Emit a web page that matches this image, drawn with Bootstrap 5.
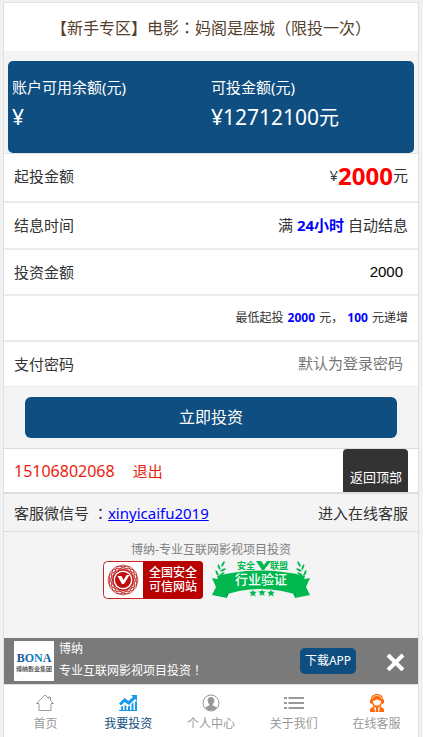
<!DOCTYPE html>
<html lang="zh-CN">
<head>
<meta charset="utf-8">
<meta name="viewport" content="width=device-width, initial-scale=1">
<title>博纳 - 我要投资</title>
<link href="https://cdn.jsdelivr.net/npm/bootstrap@5.3.0/dist/css/bootstrap.min.css" rel="stylesheet">
<style>
  body { background: #f1f1f1; color: #333; font: 15px/24px "Noto Sans", "Noto Sans CJK SC", sans-serif; padding: 2px 4px 0 3px; }
  .shell { min-height: calc(100vh - 2px); background: #f4f4f4; border: 1px solid #e0e0e0; border-bottom: 0; }
  .page-title { font-size: 16px; line-height: 24px; padding: 12px 0 11px; color: #54402e; }
  .centered-mark { font-family: "Noto Sans CJK TC", sans-serif; }
  .balance { background: #0f4e80; border-radius: 5px; margin: 10px 4px 0; padding: 14px 4px 17px; }
  .balance dd { font-size: 20px; line-height: 36px; }
  .digits { font-size: 21px; }
  .line { padding: 10px; border-bottom: 2px solid #eaeaea; background: #fff; }
  .line:first-child { border-top: 1px solid #e4e4e4; padding: 8px 10px 12px; }
  .line:nth-child(2) { padding-bottom: 11px; }
  .line:last-child { border-bottom-width: 1px; }
  .price { line-height: 27px; }
  .price b { font-size: 24px; color: #f00; }
  .hot { color: #00f; }
  .line input { font-family: "Liberation Sans", "Noto Sans CJK SC", sans-serif; line-height: 24px; width: 180px; padding: 0 5px 0 0; color: #000; background: transparent; }
  .line input::placeholder { color: #757575; }
  .fine { font-size: 12px; }
  .fine .hot { margin: 0 1px; }
  .submit-wrap { padding: 10px 21px; }
  .btn-invest { background: #0f4e80; color: #fff; font-size: 16px; line-height: 41px; border-radius: 6px; }
  .account { border-top: 1px solid #dcdcdc; border-bottom: 2px solid #dcdcdc; padding: 0 10px; }
  .account a { color: #ea1c0d; }
  .account .phone { font-size: 16px; margin-right: 18px; }
  .account .to-top { background: #333; color: #fff; font-size: 13px; line-height: 20px; padding: 18px 6px 5px 7px; border-radius: 4px 4px 0 0; }
  .service { padding: 7px 10px 6px; border-bottom: 1px solid #dcdcdc; }
  .service .wechat { color: #00f; }
  .site-note { color: #808080; font-size: 12px; line-height: 20px; padding-top: 8px; }
  .app-bar { background: #7a7a7a; color: #fff; font-size: 12px; line-height: 21px; padding: 0 13px 0 10px; height: 46px; }
  .app-name { padding: 0 0 3px 5px; }
  .btn-app { background: #0f4e80; color: #fff; font-size: 12px; line-height: 26px; border-radius: 5px; width: 56px; margin-right: 30px; }
  .tabs { background: #fff; border-top: 1px solid #e0e0e0; padding: 8px 0 3px; font-size: 12px; line-height: 21px; }
  .tabs a { color: #999; }
  .tabs a.active { color: #0f4e80; }
</style>
<script src="https://cdn.jsdelivr.net/npm/bootstrap@5.3.0/dist/js/bootstrap.bundle.min.js"></script>
</head>
<body>
<div class="shell d-flex flex-column" id="top">
  <h1 class="page-title bg-white text-center fw-normal m-0">【新手专区】电影<span class="centered-mark" lang="zh-TW">：</span>妈阁是座城（限投一次）</h1>

  <section class="balance text-white">
    <div class="row g-0">
      <dl class="col-6 m-0"><dt class="fw-normal">账户可用余额(元)</dt><dd class="m-0"><span class="digits">¥</span></dd></dl>
      <dl class="col-6 m-0"><dt class="fw-normal">可投金额(元)</dt><dd class="m-0"><span class="digits">¥12712100</span>元</dd></dl>
    </div>
  </section>

  <form>
    <div>
      <div class="line d-flex justify-content-between align-items-center"><span>起投金额</span><span class="price d-flex align-items-center">¥<b>2000</b>元</span></div>
      <div class="line d-flex justify-content-between"><span>结息时间</span><span>满 <b class="hot">24小时</b> 自动结息</span></div>
      <div class="line d-flex justify-content-between"><label for="amount">投资金额</label><input class="border-0 text-end" id="amount" type="text" inputmode="numeric" value="2000"></div>
      <div class="line fine text-end">最低起投 <b class="hot">2000</b> 元， <b class="hot">100</b> 元递增</div>
      <div class="line d-flex justify-content-between"><label for="paypwd">支付密码</label><input class="border-0 text-end" id="paypwd" type="password" placeholder="默认为登录密码"></div>
    </div>
    <div class="submit-wrap"><button class="btn-invest border-0 w-100 p-0 d-block" type="button">立即投资</button></div>
  </form>

  <div class="account bg-white d-flex align-items-center">
    <a class="phone text-decoration-none" href="#account">15106802068</a>
    <a class="text-decoration-none" href="#logout">退出</a>
    <a class="to-top text-decoration-none ms-auto" href="#top">返回顶部</a>
  </div>
  <div class="service d-flex justify-content-between">
    <span>客服微信号 <span class="centered-mark" lang="zh-TW">：</span><a class="wechat" href="#wechat">xinyicaifu2019</a></span>
    <a class="text-reset text-decoration-none" href="#service">进入在线客服</a>
  </div>

  <div class="text-center">
    <p class="site-note m-0">博纳-专业互联网影视项目投资</p>
    <div class="d-flex justify-content-center">
      <svg class="me-2" width="100" height="39" viewBox="0 0 100 39" role="img" aria-label="全国安全可信网站">
        <rect x=".5" y="1.500" width="99" height="37" rx="4" fill="#fff" stroke="#c22"/>
        <path d="M40 1h56a4 4 0 0 1 4 4v30a4 4 0 0 1-4 4H40z" fill="#b90000"/>
        <g fill="none" stroke="#bd1c1c" stroke-width=".8">
          <circle cx="20" cy="20" r="10"/>
          <ellipse cx="20" cy="20" rx="15" ry="10"/>
          <ellipse cx="20" cy="20" rx="15" ry="10" transform="rotate(30 20 20)"/>
          <ellipse cx="20" cy="20" rx="15" ry="10" transform="rotate(60 20 20)"/>
          <ellipse cx="20" cy="20" rx="15" ry="10" transform="rotate(90 20 20)"/>
          <ellipse cx="20" cy="20" rx="15" ry="10" transform="rotate(120 20 20)"/>
          <ellipse cx="20" cy="20" rx="15" ry="10" transform="rotate(150 20 20)"/>
        </g>
        <circle cx="20" cy="20" r="8" fill="#c00d0d"/>
        <path d="M14.500 16h4l2 4 3-5h3l-5.500 9h-2z" fill="#fff"/>
        <g fill="#fff" font-family="Liberation Sans, Noto Sans CJK SC, sans-serif" font-size="12" font-weight="500">
          <text x="46" y="17">全国安全</text><text x="46" y="31">可信网站</text>
        </g>
      </svg>
      <svg class="me-2" width="100" height="39" viewBox="0 0 100 39" role="img" aria-label="安全联盟行业验证">
        <g fill="#00b84e">
          <path d="M1 18l11 2v11l6 1-2 6-15-3 4-8zM99 18l-11 2v11l-6 1 2 6 15-3-4-8z"/>
          <path d="M11 31l6 1v4zM89 31l-6 1v4z" fill="#078238"/>
          <path d="M6 16Q50 5 94 16L89 36Q50 22 11 36z"/>
          <path d="M45 1h5l3 4 3-4h4l-7 9h-2z"/>
          <path d="M42 29l1 2.500 3 .2-2 2 .8 3-2.800-1.500-2.600 1.500.6-3-2-2 3-.2zM51 28.500l1 2.500 3 .2-2 2 .8 3-2.800-1.500-2.600 1.500.6-3-2-2 3-.2zM60 29l1 2.500 3 .2-2 2 .8 3-2.800-1.500-2.600 1.500.6-3-2-2 3-.2z" stroke="#f4f4f4" stroke-width=".4"/>
          <g id="leaves"><ellipse cx="12" cy="4" rx="1" ry="3" transform="rotate(30 12 4)"/><ellipse cx="8" cy="7" rx="1" ry="3" transform="rotate(-20 8 7)"/><ellipse cx="12" cy="10" rx="1" ry="3" transform="rotate(65 12 10)"/><ellipse cx="6" cy="13" rx="1" ry="3" transform="rotate(-25 6 13)"/><ellipse cx="11" cy="14" rx="1" ry="3" transform="rotate(60 11 14)"/></g>
          <use href="#leaves" transform="matrix(-1 0 0 1 100 0)"/>
        </g>
        <g font-family="Liberation Sans, Noto Sans CJK SC, sans-serif" font-weight="700" text-anchor="middle">
          <text x="35" y="9" font-size="9" fill="#00b84e">安全</text>
          <text x="68" y="9" font-size="9" fill="#00b84e">联盟</text>
          <text x="50" y="24" font-size="13" fill="#fff" font-weight="500">行业验证</text>
        </g>
      </svg>
    </div>
  </div>

  <footer class="mt-auto">
    <div class="app-bar d-flex align-items-center">
      <svg width="40" height="40" viewBox="0 0 40 40" role="img" aria-label="BONA 博纳影业集团">
        <defs><linearGradient id="ink"><stop stop-color="#0d4c8c"/><stop offset=".6" stop-color="#1687cc"/><stop offset="1" stop-color="#0d5795"/></linearGradient></defs>
        <path fill="#fff" d="M0 0h40v40H0z"/>
        <text x="20" y="21" text-anchor="middle" font-family="Liberation Serif, serif" font-size="12" font-weight="700" fill="url(#ink)">BONA</text>
        <text x="20" y="30" text-anchor="middle" font-family="Liberation Sans, Noto Sans CJK SC, sans-serif" font-size="6" font-weight="700" fill="#555">博纳影业集团</text>
      </svg>
      <div class="app-name">博纳<br>专业互联网影视项目投资<span class="centered-mark" lang="zh-TW">！</span></div>
      <button class="btn-app border-0 p-0 ms-auto" type="button">下载APP</button>
      <button class="bg-transparent border-0 p-0 lh-1" type="button" aria-label="关闭"><svg width="19" height="20" viewBox="0 0 19 20" fill="none" stroke="#fff" stroke-width="4"><path d="M2 4l15 15M17 4L2 19"/></svg></button>
    </div>
    <nav class="tabs d-flex text-center">
      <a class="col text-decoration-none" href="#home">
        <svg class="d-block mx-auto" width="20" height="20" viewBox="0 0 20 20" fill="none" stroke="#999" stroke-linejoin="round"><path d="M10 2L1.500 10.500H4V17.500H16V10.500H18.500L15.500 7.500V4H13.500V5.500z"/></svg>首页</a>
      <a class="col text-decoration-none active" href="#invest">
        <svg class="d-block mx-auto" width="20" height="20" viewBox="0 0 20 20" fill="#149bf0"><path d="M1 10.500L6.500 5l4 3L15 4l-2-2h6v6l-2-2-6 6-4.500-3L3 12.500zM3 14l2-1v5H3zM6.500 12l2 1v5h-2zM10 13.500l2-1V18h-2zM13.500 11l2-1.500V18h-2zM17 9l2-1v10h-2zM1 17h18v1H1z"/></svg>我要投资</a>
      <a class="col text-decoration-none" href="#me">
        <svg class="d-block mx-auto" width="20" height="20" viewBox="0 0 20 20"><circle cx="10" cy="10" r="8" fill="none" stroke="#999"/><path fill="#999" d="M10 4c-2.200 0-3.500 1.500-3.300 3.700.1 1.500.7 2.800 1.600 3.500v1L4 14.500c1.300 1.900 3.500 3 6 3s4.700-1.100 6-3l-4.300-2.300v-1c.9-.7 1.500-2 1.600-3.500C13.500 5.500 12.200 4 10 4z"/></svg>个人中心</a>
      <a class="col text-decoration-none" href="#about">
        <svg class="d-block mx-auto" width="20" height="20" viewBox="0 0 20 20" stroke="#999" stroke-width="2"><path d="M0 5h3M4.500 5H20M0 10h3M4.500 10H20M0 15h3M4.500 15H20"/></svg>关于我们</a>
      <a class="col text-decoration-none" href="#online">
        <svg class="d-block mx-auto" width="20" height="20" viewBox="0 0 20 20"><path fill="#ff6b0a" d="M10 1C6 1 4 3.500 4 6L3 7v3l2 1c1 2 3 3 5 3s4-1 5-3l2-1V7l-1-1c0-2.500-2-5-6-5z"/><path fill="#fff" d="M6 8l4-1.500L14 8c0 3-1.500 4.500-4 4.500S6 11 6 8z"/><path fill="none" stroke="#fff" stroke-width=".7" d="M5.500 6C6 3 8 2.500 10 2.500S14 3 14.500 6"/><path fill="#ff6b0a" d="M3 19v-3l4-3 3 1 3-1 4 3v3z"/><path fill="#fff" d="M7 14l2 1-.5 4H8zM13 14l-2 1 .5 4h.5zM8 11h4v.7H8z"/></svg>在线客服</a>
    </nav>
  </footer>
</div>
</body>
</html>
